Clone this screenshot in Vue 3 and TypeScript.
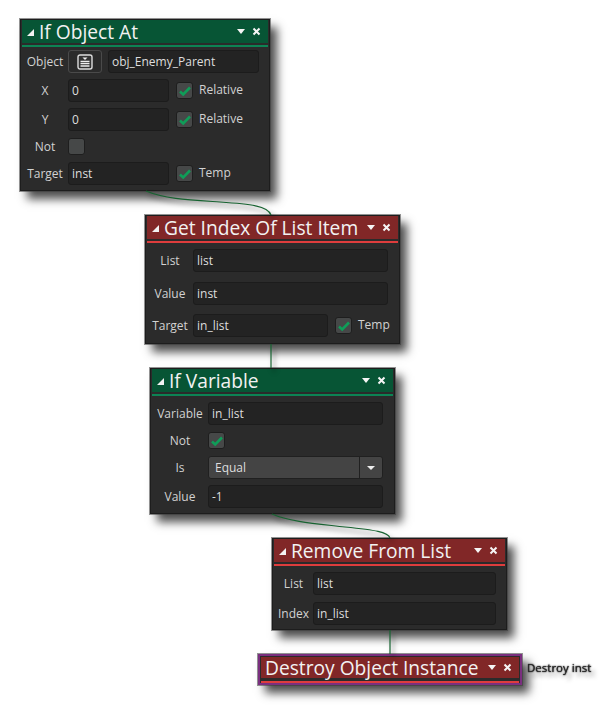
<script setup lang="ts">
type Row = {
  label: string
  kind: 'input' | 'object' | 'check' | 'select'
  value?: string
  checked?: boolean
  side?: string
}
type GmlNode = {
  title: string
  color: 'green' | 'red'
  x: number
  y: number
  w: number
  label: number
  gap: number
  top: number
  right: number
  bottom: number
  side: number
  rows: Row[]
}

const nodes: GmlNode[] = [
  {
    title: 'If Object At', color: 'green', x: 20, y: 19, w: 250, label: 46, gap: 6, top: 3, right: 9, bottom: 5, side: 90,
    rows: [
      {label: 'Object', kind: 'object', value: 'obj_Enemy_Parent'},
      {label: 'X', kind: 'input', value: '0', side: 'Relative'},
      {label: 'Y', kind: 'input', value: '0', side: 'Relative'},
      {label: 'Not', kind: 'check', checked: false},
      {label: 'Target', kind: 'input', value: 'inst', side: 'Temp'},
    ]
  },
  {
    title: 'Get Index Of List Item', color: 'red', x: 145, y: 215, w: 255, label: 46, gap: 9.5, top: 6, right: 10, bottom: 6, side: 60,
    rows: [
      {label: 'List', kind: 'input', value: 'list'},
      {label: 'Value', kind: 'input', value: 'inst'},
      {label: 'Target', kind: 'input', value: 'in_list', side: 'Temp'},
    ]
  },
  {
    title: 'If Variable', color: 'green', x: 150, y: 368, w: 245, label: 56, gap: 6, top: 6, right: 10, bottom: 5, side: 0,
    rows: [
      {label: 'Variable', kind: 'input', value: 'in_list'},
      {label: 'Not', kind: 'check', checked: true},
      {label: 'Is', kind: 'select', value: 'Equal'},
      {label: 'Value', kind: 'input', value: '-1'},
    ]
  },
  {
    title: 'Remove From List', color: 'red', x: 272, y: 538, w: 235, label: 39, gap: 7, top: 6, right: 9, bottom: 4, side: 0,
    rows: [
      {label: 'List', kind: 'input', value: 'list'},
      {label: 'Index', kind: 'input', value: 'in_list'},
    ]
  },
]
</script>

<template>
  <div class="canvas">
    <div
      v-for="n in nodes"
      :key="n.title"
      class="node"
      :class="n.color"
      :style="{left: n.x + 'px', top: n.y + 'px', width: n.w + 'px'}"
    >
      <div class="head">
        <span class="fold"></span>
        <span class="title">{{ n.title }}</span>
        <span class="menu"></span>
        <svg class="close" width="9" height="9" viewBox="0 0 9 9"><path d="M1.5 1.5l6 6M7.5 1.5l-6 6"/></svg>
      </div>
      <div class="rule"></div>
      <div
        class="body"
        :style="{rowGap: n.gap + 'px', paddingTop: n.top + 'px', paddingRight: n.right + 'px', paddingBottom: n.bottom + 'px'}"
      >
        <div v-for="r in n.rows" :key="r.label" class="row">
          <label :style="{width: n.label + 'px'}">{{ r.label }}</label>
          <template v-if="r.kind === 'object'">
            <button class="pick">
              <svg width="16" height="16" viewBox="0 0 16 16">
                <rect x="1" y="1" width="14" height="14" rx="2" fill="#333" stroke="#ddd" stroke-width="1.4"/>
                <path d="M5.5 3.5h5L8 6z" fill="#eee"/>
                <path d="M3.5 7.5h9M3.5 9.7h9M3.5 12h9" stroke="#eee" stroke-width="1.3"/>
              </svg>
            </button>
            <div class="field">{{ r.value }}</div>
          </template>
          <div v-else-if="r.kind === 'input'" class="field">{{ r.value }}</div>
          <div v-else-if="r.kind === 'check'" class="check-row">
            <span class="box">
              <svg v-if="r.checked" width="14" height="12" viewBox="0 0 14 12"><path d="M2 6.5l3.2 3L12 2.5"/></svg>
            </span>
          </div>
          <div v-else class="select">
            <span class="sel-value">{{ r.value }}</span>
            <span class="sel-btn"><i></i></span>
          </div>
          <div v-if="r.side" class="side" :style="{width: n.side + 'px'}">
            <span class="box">
              <svg width="14" height="12" viewBox="0 0 14 12"><path d="M2 6.5l3.2 3L12 2.5"/></svg>
            </span>
            <span class="side-text">{{ r.side }}</span>
          </div>
        </div>
      </div>
    </div>

    <div class="node red selected">
      <div class="head">
        <span class="title">Destroy Object Instance</span>
        <span class="menu"></span>
        <svg class="close" width="9" height="9" viewBox="0 0 9 9"><path d="M1.5 1.5l6 6M7.5 1.5l-6 6"/></svg>
      </div>
      <div class="rule"></div>
    </div>
    <div class="comment">Destroy inst</div>

    <svg class="wires" width="613" height="705" viewBox="0 0 613 705">
      <g class="wire-shadow">
        <path d="M146 191C165 199 190 200 220 202C250 204 268 206 271 215"/>
        <path d="M271 344V368"/>
        <path d="M272 514C290 522 320 524 345 527C375 530 388 532 390 538"/>
        <path d="M390 630V654"/>
      </g>
      <g class="wire">
        <path d="M146 191C165 199 190 200 220 202C250 204 268 206 271 215"/>
        <path d="M271 344V368"/>
        <path d="M272 514C290 522 320 524 345 527C375 530 388 532 390 538"/>
        <path d="M390 630V654"/>
      </g>
    </svg>
  </div>
</template>

<style>
html, body {
  background: #fff;
}
</style>

<style scoped>
.canvas {
  position: relative;
  width: 613px;
  height: 705px;
  overflow: hidden;
  background: #fff;
  font-family: "Open Sans", "Noto Sans", sans-serif;
}
.wires {
  position: absolute;
  left: 0;
  top: 0;
  pointer-events: none;
}
.wires path {
  fill: none;
}
.wire path {
  stroke: #176331;
  stroke-width: 1.2;
}
.wire-shadow {
  transform: translate(3px, 4px);
  filter: blur(2.5px);
}
.wire-shadow path {
  stroke: rgba(0, 0, 0, .35);
  stroke-width: 2;
}
.node {
  position: absolute;
  box-sizing: border-box;
  background: #2b2b2b;
  border: 1px solid #1d1d1d;
  padding: 0 1px;
  box-shadow: 0 0 0 1px rgba(60, 60, 60, .55), 7px 8px 9px rgba(0, 0, 0, .7);
  color: #e4e4e4;
}
.head {
  display: flex;
  align-items: center;
  height: 23px;
  padding: 0 7px 0 5px;
}
.green .head {
  background: #075535;
}
.red .head {
  background: #812727;
}
.rule {
  height: 2px;
  margin-top: 2px;
}
.green .rule {
  background: #0c8454;
}
.red .rule {
  background: #de3d3d;
}
.fold {
  width: 0;
  height: 0;
  border-left: 7px solid transparent;
  border-bottom: 7px solid #f2f2f2;
  margin-right: 5px;
  margin-top: 2px;
}
.title {
  flex: 1;
  font-size: 19.2px;
  font-weight: 400;
  color: #f2f2f2;
  white-space: nowrap;
  line-height: 23px;
}
.menu {
  width: 0;
  height: 0;
  border-left: 4.5px solid transparent;
  border-right: 4.5px solid transparent;
  border-top: 5px solid #f5f5f5;
  margin-right: 7px;
}
.close path {
  stroke: #f5f5f5;
  stroke-width: 2;
  fill: none;
}
.body {
  display: flex;
  flex-direction: column;
}
.row {
  display: flex;
  align-items: center;
}
label {
  flex: none;
  text-align: center;
  font-size: 12px;
  color: #d2d2d2;
  white-space: nowrap;
}
.field {
  flex: 1;
  min-width: 0;
  box-sizing: border-box;
  height: 23px;
  line-height: 21px;
  padding: 0 3px;
  background: #232323;
  border: 1px solid #1c1c1c;
  border-radius: 3px;
  font-size: 12px;
  color: #dedede;
}
.pick {
  flex: none;
  width: 34px;
  height: 23px;
  margin-right: 6px;
  padding: 0;
  display: flex;
  align-items: center;
  justify-content: center;
  background: #2b2b2b;
  border: 1px solid #4a4a4a;
  border-radius: 3px;
}
.check-row {
  height: 19px;
  display: flex;
  align-items: center;
}
.box {
  flex: none;
  box-sizing: border-box;
  width: 17px;
  height: 17px;
  display: flex;
  align-items: center;
  justify-content: center;
  background: #464848;
  border: 1px solid #1e1e1e;
  border-radius: 3px;
}
.box path {
  fill: none;
  stroke: #0f9d58;
  stroke-width: 2.6;
}
.side {
  flex: none;
  display: flex;
  align-items: center;
  padding-left: 7px;
  box-sizing: border-box;
  gap: 6px;
}
.side-text {
  font-size: 12px;
  color: #d2d2d2;
  margin-top: -3px;
}
.select {
  flex: 1;
  display: flex;
  height: 23px;
  box-sizing: border-box;
  background: #444;
  border: 1px solid #202020;
  border-radius: 3px;
}
.sel-value {
  flex: 1;
  padding-left: 6px;
  font-size: 12px;
  line-height: 21px;
  color: #dedede;
}
.sel-btn {
  width: 22px;
  display: flex;
  align-items: center;
  justify-content: center;
  border-left: 1px solid #202020;
}
.sel-btn i {
  width: 0;
  height: 0;
  border-left: 4px solid transparent;
  border-right: 4px solid transparent;
  border-top: 4px solid #eee;
}
.selected {
  left: 258px;
  top: 654px;
  width: 264px;
  height: 31px;
  padding: 1px;
  border: 2px solid #7a2f7f;
}
.selected .head {
  height: 21px;
  padding-left: 4px;
}
.selected .rule {
  margin-top: 3px;
}
.comment {
  position: absolute;
  left: 527px;
  top: 660px;
  font-size: 11.5px;
  font-weight: 400;
  color: #2a2a2a;
  white-space: nowrap;
  filter: blur(.7px);
  text-shadow: 0 0 1px #111, 0 0 2px #333, 4px 5px 4px rgba(0, 0, 0, .4);
}
</style>
